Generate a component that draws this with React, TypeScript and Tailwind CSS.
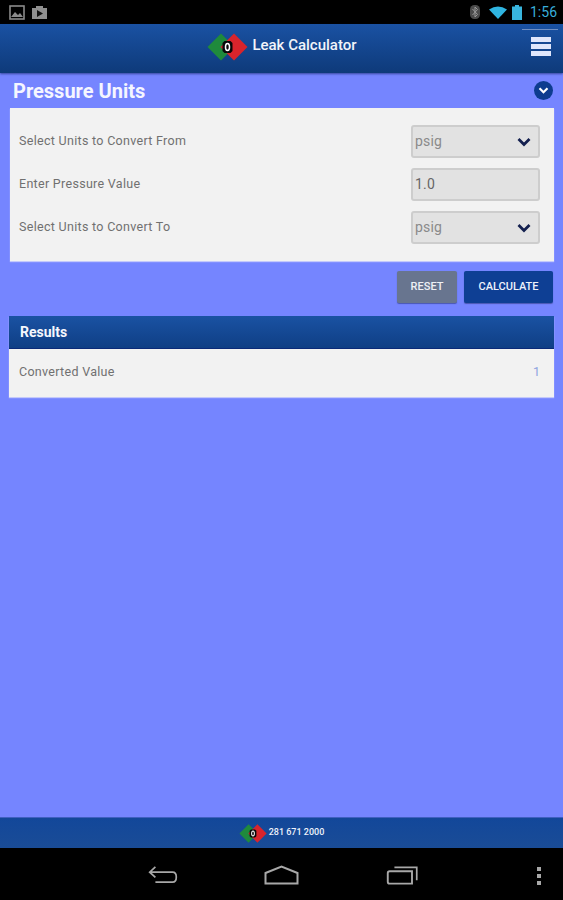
const sans = "font-['Roboto','Liberation_Sans',sans-serif]";

function Logo({ small }: { small?: boolean }) {
  const size = small ? 'w-[28px] h-[19px]' : 'w-[41px] h-[28px]';
  return (
    <svg viewBox="0 0 41 28" className={size}>
      <polygon points="0.5,14 14,0.5 27.5,14 14,27.5" fill="#1f8a3c" />
      <polygon points="13.5,14 27,0.5 40.5,14 27,27.5" fill="#d8242c" />
      <polygon points="15.5,10 17.5,8 23.5,8 25.5,10 25.5,18 23.5,20 17.5,20 15.5,18" fill="#080808" />
      <ellipse cx="20.5" cy="14" rx="2" ry="3.6" fill="none" stroke="#ffffff" strokeWidth="1.5" />
    </svg>
  );
}

function Chevron() {
  return (
    <svg viewBox="0 0 14 10" className="w-[14px] h-[10px]">
      <path d="M1.5 2 L7 7.5 L12.5 2" fill="none" stroke="#14204f" strokeWidth="2.8" />
    </svg>
  );
}

function Field({ label, value, select }: { label: string; value: string; select?: boolean }) {
  return (
    <div className="flex items-center justify-between h-[33px]">
      <span className="text-[12.5px] text-[#707070] tracking-[0.3px]">{label}</span>
      <div className="w-[129px] h-[33px] mr-[4px] flex items-center justify-between pl-[2px] pr-[7px] bg-[#e2e2e2] border-2 border-[#cdcdcd] rounded-[3px]">
        <span className={select ? 'text-[14px] tracking-[0.2px] text-[#8a8a8a]' : 'text-[14px] tracking-[0.2px] text-[#666666]'}>{value}</span>
        {select && <Chevron />}
      </div>
    </div>
  );
}

export default function App() {
  return (
    <div className={`${sans} w-[563px] h-[900px] flex flex-col bg-[#7585ff] overflow-hidden`}>
      {/* status bar */}
      <div className="h-[24px] bg-black flex items-center justify-between pl-[9px] pr-[6px]">
        <div className="flex items-center gap-[7px]">
          <svg viewBox="0 0 16 15" className="w-[16px] h-[15px]">
            <rect x="1" y="1" width="14" height="13" fill="none" stroke="#8a8a8a" strokeWidth="1.6" />
            <path d="M2 12 L6 7 L9 10 L11 8 L14 12 Z" fill="#8a8a8a" />
          </svg>
          <svg viewBox="0 0 15 14" className="w-[15px] h-[14px]">
            <path d="M0 3 H4 V1 H11 V3 H15 V14 H0 Z" fill="#8f8f8f" />
            <path d="M5 5 L11 8.5 L5 12 Z" fill="#111111" />
          </svg>
        </div>
        <div className="flex items-center">
          <svg viewBox="0 0 10 14" className="w-[10px] h-[14px] mr-[9px]">
            <rect x="0" y="0" width="10" height="14" rx="4.5" fill="#4b4b4b" />
            <path d="M2.5 4 L7.5 9.5 L5 12 V2 L7.5 4.5 L2.5 10" fill="none" stroke="#9a9a9a" strokeWidth="1" />
          </svg>
          <svg viewBox="0 0 18 13" className="w-[18px] h-[13px] mr-[5px]">
            <path d="M0 3.5 Q9 -2.5 18 3.5 L9 13 Z" fill="#2fb4e0" />
          </svg>
          <svg viewBox="0 0 10 15" className="w-[10px] h-[15px] mr-[8px]">
            <path d="M3 0 H7 V1.5 H10 V15 H0 V1.5 H3 Z" fill="#39b5dd" />
          </svg>
          <span className="text-[14px] text-[#38aedb] leading-none">1:56</span>
        </div>
      </div>

      {/* app header */}
      <div className="relative h-[49px] flex items-center justify-center bg-gradient-to-b from-[#1a52a3] to-[#0e3a7a] shadow-[0_1px_2px_rgba(10,30,90,0.6)]">
        <div className="flex items-center gap-[4px] mt-[-3px] mr-[-1px]">
          <Logo />
          <span className="text-[15px] mt-[-3px] font-medium text-[#f2f4fa]">Leak Calculator</span>
        </div>
        <div className="absolute right-[5px] top-[5px] w-[36px] border-t border-[#6f8fc4]" />
        <div className="absolute right-[12px] top-[13px] w-[20px] flex flex-col gap-[2px]">
          <div className="h-[5px] bg-[#dfe6fb]" />
          <div className="h-[5px] bg-[#dfe6fb]" />
          <div className="h-[5px] bg-[#dfe6fb]" />
        </div>
      </div>

      {/* section title */}
      <div className="h-[35px] flex items-center justify-between pl-[13px] pr-[10px]">
        <span className="text-[20px] font-bold text-[#f5f6ff]">Pressure Units</span>
        <div className="w-[19px] h-[19px] rounded-full bg-[#0d3c8f] flex items-center justify-center">
          <svg viewBox="0 0 12 9" className="w-[11px] h-[8px]">
            <path d="M1.5 1.5 L6 6 L10.5 1.5" fill="none" stroke="#ffffff" strokeWidth="2.4" />
          </svg>
        </div>
      </div>

      {/* form card */}
      <div className="mx-[10px] w-[544px] h-[153px] bg-[#f2f2f2] shadow-[0_1px_1px_rgba(230,230,250,0.7)] pt-[17px] pl-[9px] pr-[10px] flex flex-col gap-[10px]">
        <Field label="Select Units to Convert From" value="psig" select />
        <Field label="Enter Pressure Value" value="1.0" />
        <Field label="Select Units to Convert To" value="psig" select />
      </div>

      {/* buttons */}
      <div className="flex justify-end gap-[7px] mt-[10px] pr-[10px]">
        <button className="w-[60px] h-[32px] rounded-[2px] bg-[#68758f] text-[11px] font-medium text-[#eef0f5] shadow-[0_1px_1px_rgba(30,40,100,0.5)]">RESET</button>
        <button className="w-[89px] h-[32px] rounded-[2px] bg-[#0e3f94] text-[11px] font-medium text-[#eef2fb] shadow-[0_1px_1px_rgba(30,40,100,0.5)]">CALCULATE</button>
      </div>

      {/* results */}
      <div className="mx-[9px] w-[545px] mt-[13px] shadow-[0_1px_1px_rgba(230,230,250,0.7)]">
        <div className="h-[33px] flex items-center pl-[11px] bg-gradient-to-b from-[#1a52a3] to-[#0f3f85] border-b border-[#0a2a78]">
          <span className="text-[14px] font-bold text-[#f5f7fd]">Results</span>
        </div>
        <div className="h-[48px] flex items-center justify-between pl-[10px] pr-[14px] pb-[2px] bg-[#f2f2f2]">
          <span className="text-[12.5px] text-[#707070] tracking-[0.3px]">Converted Value</span>
          <span className="text-[12.5px] text-[#8fa4e0]">1</span>
        </div>
      </div>

      <div className="flex-1" />

      {/* footer */}
      <div className="h-[31px] flex items-center justify-center gap-[2px] bg-gradient-to-b from-[#12479a] to-[#1a4c96] border-t border-[#3f5fc0]">
        <Logo small />
        <span className="text-[9px] font-medium text-[#eef2fb]">281 671 2000</span>
      </div>

      {/* android nav */}
      <div className="relative h-[52px] bg-black">
        <svg viewBox="0 0 32 20" className="absolute left-[147px] top-[18px] w-[32px] h-[19px]">
          <path d="M8 1 L2 6.5 L8 12 M2 6.5 H26 Q30 6.5 30 11.5 Q30 17 26 17 H8" fill="none" stroke="#a8a8a8" strokeWidth="1.8" />
        </svg>
        <svg viewBox="0 0 35 20" className="absolute left-[264px] top-[17px] w-[35px] h-[20px]">
          <path d="M1.5 8 L17.5 1.5 L33.5 8 V18.5 H1.5 Z" fill="none" stroke="#a8a8a8" strokeWidth="2" />
        </svg>
        <svg viewBox="0 0 33 20" className="absolute left-[386px] top-[18px] w-[33px] h-[19px]">
          <path d="M8 1.5 H31.5 V15" fill="none" stroke="#a8a8a8" strokeWidth="1.8" />
          <path d="M3 5.5 H26.5 V18.5 H3 Q1 18.5 1 16.5 V7.5 Q1 5.5 3 5.5 Z" fill="none" stroke="#a8a8a8" strokeWidth="2" />
        </svg>
        <div className="absolute left-[537px] top-[19px] flex flex-col gap-[3px]">
          <div className="w-[4px] h-[4px] bg-[#a8a8a8]" />
          <div className="w-[4px] h-[4px] bg-[#a8a8a8]" />
          <div className="w-[4px] h-[4px] bg-[#a8a8a8]" />
        </div>
      </div>
    </div>
  );
}
